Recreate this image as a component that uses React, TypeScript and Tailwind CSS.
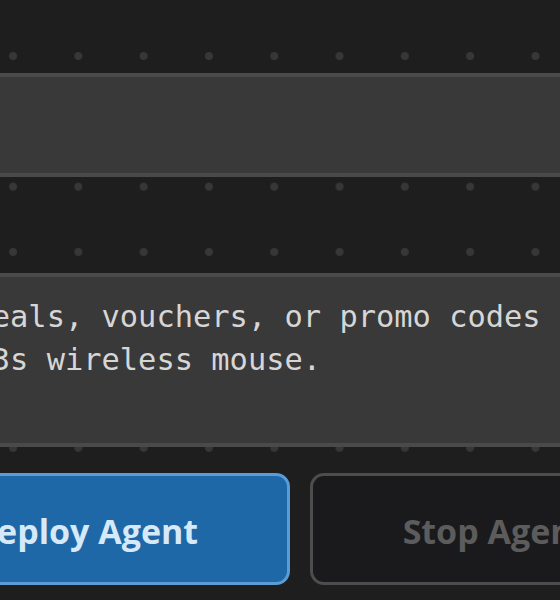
import { useState } from "react";

const DOTS =
  "bg-[#1e1e1e] bg-[radial-gradient(circle,#373737_3.5px,transparent_4.5px)] bg-[length:65.3px_65.3px] bg-[position:-19.6px_23.4px]";

export default function App() {
  const [task, setTask] = useState(
    "Search for any deals, vouchers, or promo codes for\nthe MX Anywhere 3s wireless mouse."
  );
  const [running, setRunning] = useState(false);

  return (
    <div className={`w-[560px] h-[600px] overflow-hidden ${DOTS}`}>
      {/* 확대된 영역: 왼쪽/오른쪽이 화면 밖으로 잘림 */}
      <div className="ml-[-330px] w-[1218px] pt-[73px] flex flex-col">
        {/* 상단 입력창 */}
        <div className="h-[104px] rounded-[10px] border-[4px] border-[#4a4a4a] bg-[#393939]" />

        {/* 작업 내용 입력 */}
        <div className="mt-[96px] h-[174px] rounded-[10px] border-[4px] border-[#4a4a4a] bg-[#393939] pl-[25px] pt-[18px]">
          <textarea
            value={task}
            onChange={(e) => setTask(e.target.value)}
            spellCheck={false}
            className="w-full h-full resize-none bg-transparent outline-none whitespace-pre overflow-hidden text-[#d6d6d6] text-[30.4px] leading-[43px] font-['DejaVu_Sans_Mono',monospace]"
          />
        </div>

        {/* 버튼 영역 */}
        <div className="mt-[26px] flex justify-center gap-[20px] font-['Open_Sans',sans-serif] font-bold text-[34px]">
          <button
            onClick={() => setRunning(true)}
            className="w-[400px] h-[112px] pt-[4px] pr-[10px] rounded-[14px] border-[3px] border-[#5b9bd6] bg-[#1f68a8] text-[#d6e9f8]"
          >
            Deploy Agent
          </button>
          <button
            onClick={() => setRunning(false)}
            disabled={!running}
            className="w-[358px] h-[112px] pt-[4px] pl-[12px] rounded-[14px] border-[3px] border-[#4d4d4d] bg-[#1a1a1d] text-[#5c5c5c]"
          >
            Stop Agent
          </button>
        </div>
      </div>
    </div>
  );
}
